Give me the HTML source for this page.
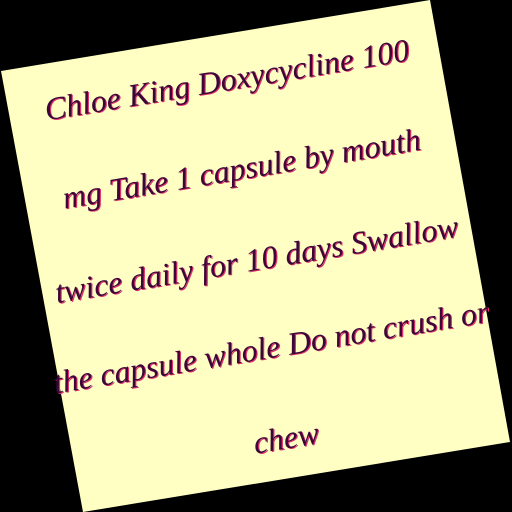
<!DOCTYPE html>
<html><head><style>
html,body{margin:0;padding:0;background:#000;width:512px;height:512px;overflow:hidden;position:relative}
.wrap{position:absolute;left:0;top:0;width:512px;height:512px;overflow:hidden}
.note{position:absolute;left:0;top:0;width:512px;height:512px;background:#ffffc4;
clip-path:polygon(1px 71px,430px 0px,510px 442px,83px 512px)}
.frame{position:absolute;left:56px;top:56px;width:400px;height:400px;transform:rotate(-9.4deg);transform-origin:200px 200px}
.l{position:absolute;left:-56px;width:512px;text-align:center;height:50px;line-height:50px;white-space:nowrap;
font-family:"Liberation Serif",cursive,serif;font-style:italic;font-size:32px;color:#3a0838;
text-shadow:1px 1px 0 #e0306a}
</style></head><body>
<div class="wrap">
<div class="note"></div>
<div class="frame">
<div class="l" style="top:-4px">Chloe King Doxycycline 100</div>
<div class="l" style="top:86px">mg Take 1 capsule by mouth</div>
<div class="l" style="top:178px">twice daily for 10 days Swallow</div>
<div class="l" style="top:267px">the capsule whole Do not crush or</div>
<div class="l" style="top:359px">chew</div>
</div>
</div>
</body></html>
